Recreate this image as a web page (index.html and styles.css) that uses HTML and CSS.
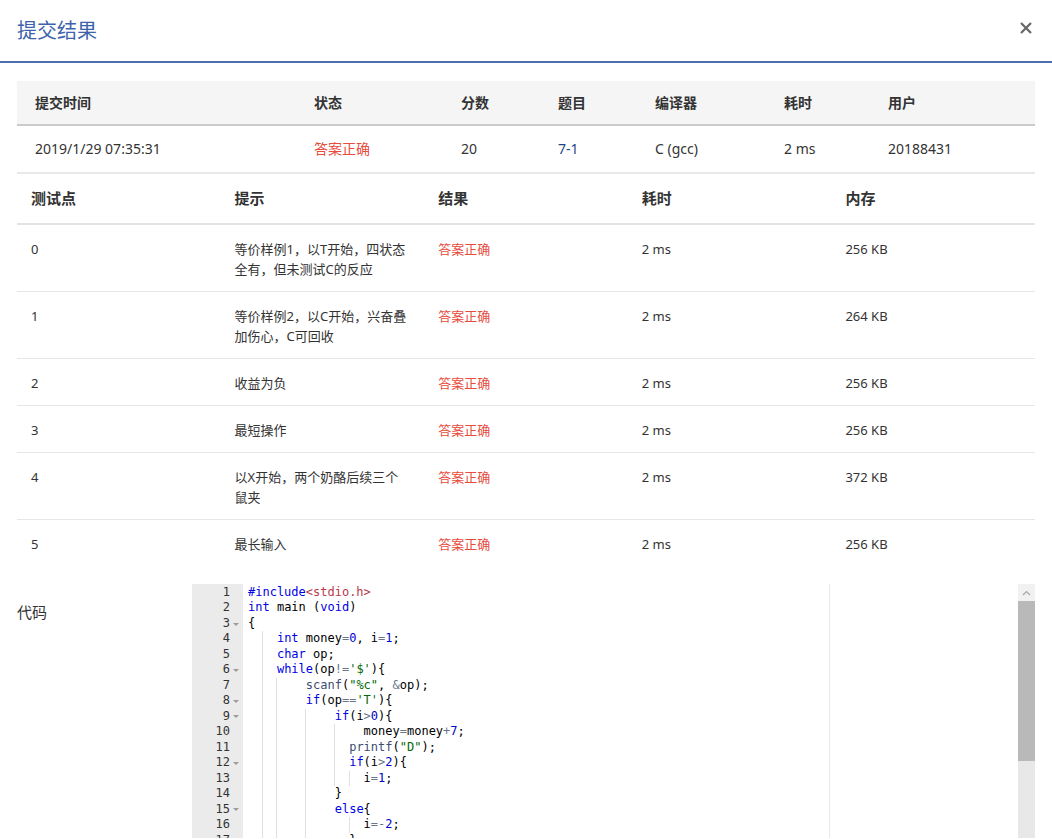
FILE: index.html
```html
<!DOCTYPE html>
<html lang="zh-CN">
<head>
<meta charset="utf-8">
<title>提交结果</title>
<link rel="stylesheet" href="styles.css">
</head>
<body>
<div class="modal">
  <div class="modal-header">
    <h2 class="title">提交结果</h2>
    <svg class="close" width="12" height="12" viewBox="0 0 12 12"><path d="M1 1L11 11M11 1L1 11" stroke="#666" stroke-width="2.2" fill="none"/></svg>
  </div>
  <div class="modal-body">
    <div class="sum">
      <div class="sum-head">
        <div>提交时间</div><div>状态</div><div>分数</div><div>题目</div><div>编译器</div><div>耗时</div><div>用户</div>
      </div>
      <div class="sum-row">
        <div>2019/1/29 07:35:31</div><div class="ok">答案正确</div><div>20</div><div class="link">7-1</div><div>C (gcc)</div><div>2 ms</div><div>20188431</div>
      </div>
    </div>

    <div class="tc">
      <div class="tc-head"><div>测试点</div><div>提示</div><div>结果</div><div>耗时</div><div>内存</div></div>
      <div class="tc-row"><div>0</div><div>等价样例1，以T开始，四状态全有，但未测试C的反应</div><div class="ok">答案正确</div><div>2 ms</div><div>256 KB</div></div>
      <div class="tc-row"><div>1</div><div>等价样例2，以C开始，兴奋叠加伤心，C可回收</div><div class="ok">答案正确</div><div>2 ms</div><div>264 KB</div></div>
      <div class="tc-row"><div>2</div><div>收益为负</div><div class="ok">答案正确</div><div>2 ms</div><div>256 KB</div></div>
      <div class="tc-row"><div>3</div><div>最短操作</div><div class="ok">答案正确</div><div>2 ms</div><div>256 KB</div></div>
      <div class="tc-row"><div>4</div><div>以X开始，两个奶酪后续三个鼠夹</div><div class="ok">答案正确</div><div>2 ms</div><div>372 KB</div></div>
      <div class="tc-row"><div>5</div><div>最长输入</div><div class="ok">答案正确</div><div>2 ms</div><div>256 KB</div></div>
    </div>

    <div class="code-sec">
      <div class="code-label">代码</div>
      <div class="editor">
        <div class="gutter">
          <div class="gl"><span>1</span><span class="fold"></span></div>
          <div class="gl"><span>2</span><span class="fold"></span></div>
          <div class="gl"><span>3</span><span class="fold on"></span></div>
          <div class="gl"><span>4</span><span class="fold"></span></div>
          <div class="gl"><span>5</span><span class="fold"></span></div>
          <div class="gl"><span>6</span><span class="fold on"></span></div>
          <div class="gl"><span>7</span><span class="fold"></span></div>
          <div class="gl"><span>8</span><span class="fold on"></span></div>
          <div class="gl"><span>9</span><span class="fold on"></span></div>
          <div class="gl"><span>10</span><span class="fold"></span></div>
          <div class="gl"><span>11</span><span class="fold"></span></div>
          <div class="gl"><span>12</span><span class="fold on"></span></div>
          <div class="gl"><span>13</span><span class="fold"></span></div>
          <div class="gl"><span>14</span><span class="fold"></span></div>
          <div class="gl"><span>15</span><span class="fold on"></span></div>
          <div class="gl"><span>16</span><span class="fold"></span></div>
          <div class="gl"><span>17</span><span class="fold"></span></div>
        </div>
        <div class="content">
<div class="ln"><span class="kw">#include</span><span class="inc">&lt;stdio.h&gt;</span></div>
<div class="ln"><span class="kw">int</span> main (<span class="kw">void</span>)</div>
<div class="ln">{</div>
<div class="ln g1">    <span class="kw">int</span> money<span class="op">=</span><span class="num">0</span>, i<span class="op">=</span><span class="num">1</span>;</div>
<div class="ln g1">    <span class="kw">char</span> op;</div>
<div class="ln g1">    <span class="kw">while</span>(op<span class="op">!=</span><span class="str">'$'</span>){</div>
<div class="ln g2">        <span class="fn">scanf</span>(<span class="str">"%c"</span>, <span class="op">&amp;</span>op);</div>
<div class="ln g2">        <span class="kw">if</span>(op<span class="op">==</span><span class="str">'T'</span>){</div>
<div class="ln g3">            <span class="kw">if</span>(i<span class="op">&gt;</span><span class="num">0</span>){</div>
<div class="ln g4">                money<span class="op">=</span>money<span class="op">+</span><span class="num">7</span>;</div>
<div class="ln g4">              <span class="fn">printf</span>(<span class="str">"D"</span>);</div>
<div class="ln g4">              <span class="kw">if</span>(i<span class="op">&gt;</span><span class="num">2</span>){</div>
<div class="ln g5">                i<span class="op">=</span><span class="num">1</span>;</div>
<div class="ln g3">            }</div>
<div class="ln g3">            <span class="kw">else</span>{</div>
<div class="ln g6">                i<span class="op">=-</span><span class="num">2</span>;</div>
<div class="ln g3">              }</div>
        </div>
        <div class="scrollbar">
          <div class="sb-up"><svg width="9" height="6" viewBox="0 0 9 6"><path d="M1 5L4.5 1.5L8 5" stroke="#a6a6a6" stroke-width="1.2" fill="none"/></svg></div>
          <div class="sb-thumb"></div>
        </div>
      </div>
    </div>
  </div>
</div>
</body>
</html>
```

FILE: styles.css
```css
html, body {
  margin: 0;
  padding: 0;
  background: #fff;
}

body {
  font-family: "Noto Sans", "Noto Sans CJK SC", sans-serif;
  color: #333;
  overflow: hidden;
}

.modal-header {
  height: 61px;
  border-bottom: 2px solid #4e6dae;
  display: flex;
  align-items: center;
  justify-content: space-between;
  padding: 0 20px 0 17px;
}

.title {
  margin: 0;
  font-size: 20px;
  font-weight: normal;
  line-height: 28px;
  color: #3d63ad;
}

.close {
  margin-top: -6px;
}

.modal-body {
  padding: 18px 17px 0;
}

/* summary */
.sum-head,
.sum-row {
  display: grid;
  grid-template-columns: 279px 147px 97px 97px 129px 104px 1fr;
  align-items: center;
  font-size: 14px;
  line-height: 20px;
}

.sum-head > div,
.sum-row > div {
  padding-left: 18px;
}

.sum-head {
  height: 43px;
  background: #f5f5f5;
  border-bottom: 2px solid #cbcbcb;
  font-weight: bold;
}

.sum-row {
  height: 46px;
  border-bottom: 2px solid #e8e8e8;
}

.ok {
  color: #e74c3c;
}

.link {
  color: #1f4584;
}

/* test cases */
.tc-head,
.tc-row {
  display: grid;
  grid-template-columns: repeat(5, 1fr);
  line-height: 20px;
}

.tc-head {
  font-size: 15px;
  font-weight: bold;
  border-bottom: 2px solid #e3e3e3;
}

.tc-head > div {
  padding: 14px 14px 15px;
}

.tc-row {
  font-size: 13px;
  border-bottom: 1px solid #e6e6e6;
}

.tc-row:last-child {
  border-bottom: none;
}

.tc-row > div {
  padding: 14px 14px 12px;
}

/* code */
.code-sec {
  display: flex;
  margin-top: 18px;
}

.code-label {
  width: 175px;
  flex: none;
  font-size: 15px;
  line-height: 20px;
  padding-top: 18px;
}

.editor {
  flex: 1;
  display: flex;
  height: 254px;
  overflow: hidden;
  font-family: "DejaVu Sans Mono", "Liberation Mono", monospace;
  font-size: 12px;
  line-height: 15.47px;
  color: #000;
}

.gutter {
  width: 51px;
  flex: none;
  background: #ebebeb;
  color: #333;
  padding-top: 1px;
}

.gl {
  display: flex;
  justify-content: flex-end;
  height: 15.47px;
  padding-right: 1px;
}

.fold {
  width: 12px;
  display: flex;
  align-items: center;
  justify-content: center;
}

.fold.on::after {
  content: "";
  border-left: 3px solid transparent;
  border-right: 3px solid transparent;
  border-top: 3px solid #9c9c9c;
  margin-top: 1px;
}

.content {
  flex: 1;
  padding: 1px 0 0 5px;
  background: linear-gradient(#e8e8e8, #e8e8e8) 586px 0 / 1px 100% no-repeat;
}

.ln {
  white-space: pre;
  height: 15.47px;
  --g: #e0e0e0;
}

.g1 {
  background:
    linear-gradient(var(--g), var(--g)) 14px 0 / 1px 100% no-repeat;
}

.g2 {
  background:
    linear-gradient(var(--g), var(--g)) 14px 0 / 1px 100% no-repeat,
    linear-gradient(var(--g), var(--g)) 28px 0 / 1px 100% no-repeat;
}

.g3 {
  background:
    linear-gradient(var(--g), var(--g)) 14px 0 / 1px 100% no-repeat,
    linear-gradient(var(--g), var(--g)) 28px 0 / 1px 100% no-repeat,
    linear-gradient(var(--g), var(--g)) 57px 0 / 1px 100% no-repeat;
}

.g4 {
  background:
    linear-gradient(var(--g), var(--g)) 14px 0 / 1px 100% no-repeat,
    linear-gradient(var(--g), var(--g)) 28px 0 / 1px 100% no-repeat,
    linear-gradient(var(--g), var(--g)) 57px 0 / 1px 100% no-repeat,
    linear-gradient(var(--g), var(--g)) 86px 0 / 1px 100% no-repeat;
}

.g5 {
  background:
    linear-gradient(var(--g), var(--g)) 14px 0 / 1px 100% no-repeat,
    linear-gradient(var(--g), var(--g)) 28px 0 / 1px 100% no-repeat,
    linear-gradient(var(--g), var(--g)) 57px 0 / 1px 100% no-repeat,
    linear-gradient(var(--g), var(--g)) 86px 0 / 1px 100% no-repeat,
    linear-gradient(var(--g), var(--g)) 101px 0 / 1px 100% no-repeat;
}

.g6 {
  background:
    linear-gradient(var(--g), var(--g)) 14px 0 / 1px 100% no-repeat,
    linear-gradient(var(--g), var(--g)) 28px 0 / 1px 100% no-repeat,
    linear-gradient(var(--g), var(--g)) 57px 0 / 1px 100% no-repeat,
    linear-gradient(var(--g), var(--g)) 101px 0 / 1px 100% no-repeat;
}

.kw { color: #0000e6; }
.inc { color: #b83a4b; }
.num { color: #0000cd; }
.str { color: #036a07; }
.op { color: #687687; }
.fn { color: #3c4c72; }

.scrollbar {
  width: 17px;
  flex: none;
  background: #e8e8e8;
  display: flex;
  flex-direction: column;
}

.sb-up {
  height: 17px;
  background: #f1f1f1;
  display: flex;
  align-items: center;
  justify-content: center;
}

.sb-thumb {
  height: 160px;
  background: #b9b9b9;
}
```
